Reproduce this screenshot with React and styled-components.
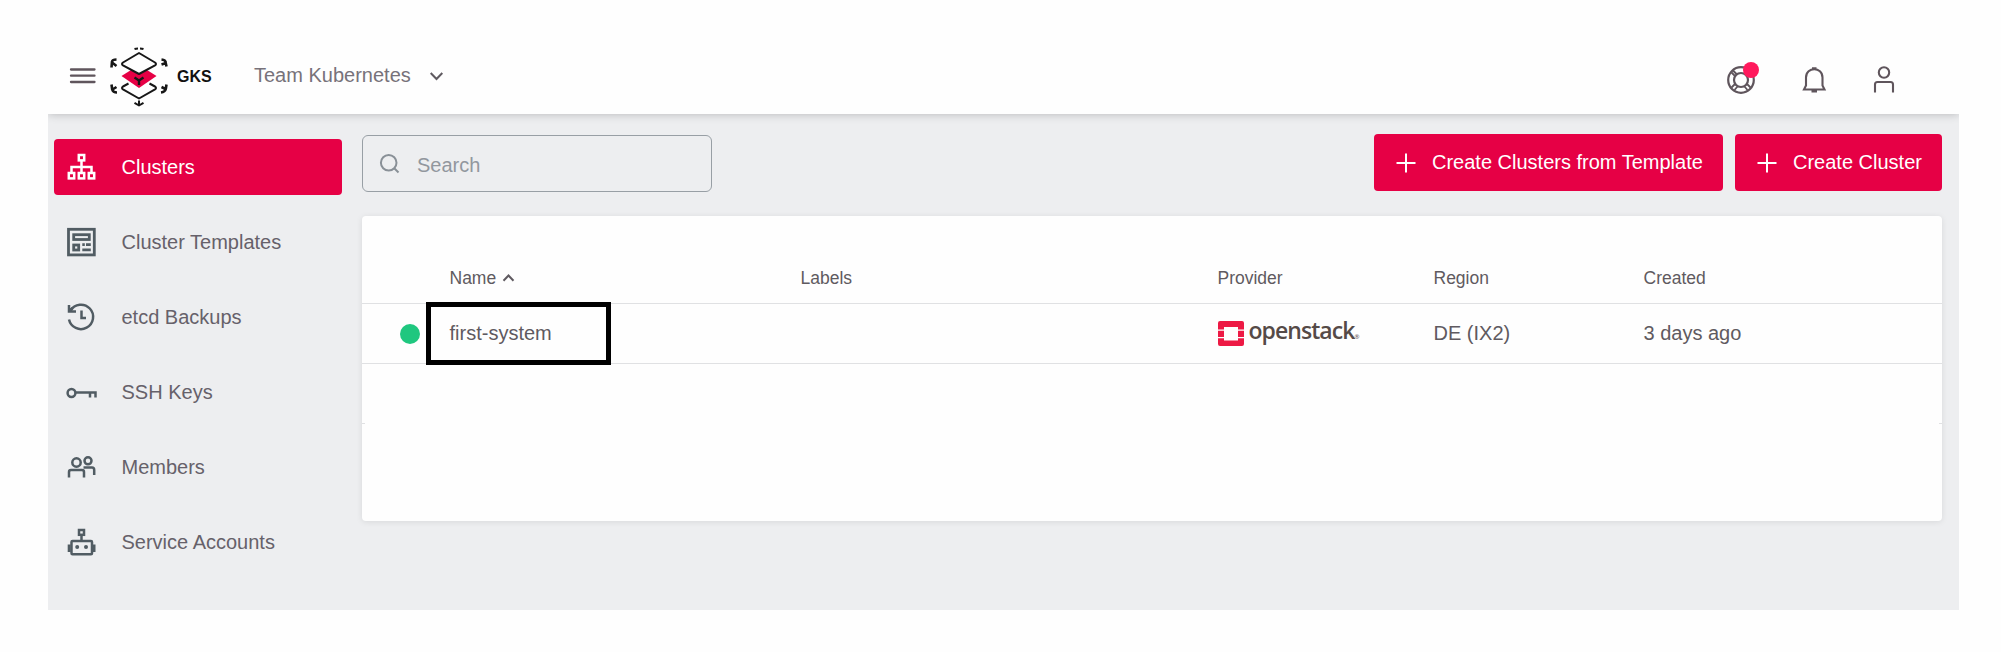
import React from "react";
import styled, { createGlobalStyle, css } from "styled-components";

const GlobalStyle = createGlobalStyle`
  *, *::before, *::after { box-sizing: border-box; }
  body {
    margin: 0;
    background: #fefefe;
    font-family: "Liberation Sans", Arial, sans-serif;
    font-size: 20px;
    color: #5f5a60;
  }
`;

const Frame = styled.div`
  width: 1911px;
  height: 610px;
  margin-left: 48px;
  display: flex;
  flex-direction: column;
  overflow: hidden;
  background: #edeef0;
`;

const Header = styled.header`
  flex: none;
  height: 114px;
  padding: 40px 59px 0 20px;
  display: flex;
  align-items: flex-start;
  justify-content: space-between;
  background: #fefefe;
  box-shadow: 0 0 9px rgba(0, 0, 0, 0.24);
  z-index: 1;
`;

const HeaderGroup = styled.div`
  display: flex;
  align-items: center;
  height: 74px;
  padding-bottom: 3px;
`;

const Icon = styled.svg.attrs((p) => ({ fill: "none", strokeWidth: p.strokeWidth || 2 }))`
  display: block;
  flex: none;
  overflow: visible;
  stroke: currentColor;
  width: ${(p) => p.$w || 32}px;
  height: ${(p) => p.$h || 32}px;
`;

const MenuButton = styled.button`
  border: 0;
  padding: 0 0 0 2px;
  margin-right: 14px;
  background: none;
  color: #5f555c;
  line-height: 0;
`;

const Brand = styled.span`
  margin: 2px 0 0 9px;
  font-size: 16px;
  font-weight: 700;
  color: #111;
  width: 77px;
`;

const Project = styled.span`
  color: #77727a;
  width: 176px;
`;

const Actions = styled(HeaderGroup)`
  gap: 38px;
  height: 81px;
  color: #5f555c;
`;

const ActionButton = styled.span`
  position: relative;
  &:first-child { margin-right: 3px; }
`;

const Badge = styled.span`
  position: absolute;
  top: -1px;
  right: -2px;
  width: 16px;
  height: 16px;
  border-radius: 50%;
  background: #ff195c;
`;

const Body = styled.div`
  flex: 1;
  display: flex;
  align-items: flex-start;
`;

const Sidebar = styled.nav`
  width: 314px;
  padding: 25px 20px 0 6px;
  display: flex;
  flex-direction: column;
  gap: 19.2px;
`;

const NavItem = styled.a`
  display: flex;
  align-items: center;
  height: 56px;
  padding-left: 12px;
  gap: 23.5px;
  border-radius: 4px;
  color: #66616a;
  svg { color: #515c63; }
  ${(p) =>
    p.$active &&
    css`
      background: #e60045;
      color: #fff;
      svg { color: #fff; }
    `}
`;

const Main = styled.main`
  flex: 1;
  padding: 20px 17px 0 0;
`;

const Toolbar = styled.div`
  display: flex;
  align-items: flex-start;
  gap: 12px;
`;

const SearchBox = styled.label`
  display: flex;
  align-items: center;
  gap: 17px;
  width: 350px;
  height: 57px;
  margin: 1px auto 0 0;
  padding: 0 17px 0 17px;
  border: 1px solid #989fa5;
  border-radius: 6px;
  color: #899097;
`;

const SearchInput = styled.input`
  flex: 1;
  min-width: 0;
  border: 0;
  padding: 3px 0 0;
  outline: 0;
  background: none;
  font: inherit;
  &::placeholder { color: #92979e; opacity: 1; }
`;

const PrimaryButton = styled.button`
  display: flex;
  align-items: center;
  gap: 16px;
  width: ${(p) => p.$width}px;
  height: 57px;
  padding: 0 0 0 22px;
  border: 0;
  border-radius: 4px;
  background: #e60045;
  color: #fff;
  font: inherit;
  white-space: nowrap;
`;

const Card = styled.section`
  height: 305px;
  margin-top: 24px;
  padding-top: 36px;
  border-radius: 4px;
  background: #fefefe;
  box-shadow: 0 1px 6px rgba(0, 0, 0, 0.09);
`;

const Row = styled.div`
  display: grid;
  grid-template-columns: 87.5px 351px 417px 216px 210px 1fr;
  align-items: center;
  height: ${(p) => (p.$head ? 52 : 60)}px;
  padding-top: ${(p) => (p.$head ? 1 : 0)}px;
  border-bottom: 1px solid #e0e1e3;
  font-size: ${(p) => (p.$head ? 17.5 : 20)}px;
`;

const HeadCell = styled.div`
  display: flex;
  align-items: center;
  gap: 7px;
`;

const Status = styled.span`
  width: 20px;
  height: 20px;
  margin: 1px 0 0 37.5px;
  border-radius: 50%;
  background: #1fc77f;
`;

const NameCell = styled.div`
  position: relative;
`;

const Highlight = styled.span`
  position: absolute;
  left: -23.5px;
  top: -20px;
  width: 185px;
  height: 63px;
  border: 5px solid #000;
  pointer-events: none;
`;

const Provider = styled.div`
  display: flex;
  align-items: center;
  gap: 5px;
  color: #554a47;
`;

const ProviderName = styled.span`
  display: inline-block;
  font-family: "Open Sans", "Noto Sans", sans-serif;
  font-weight: 600;
  font-size: 23px;
  line-height: 26px;
  letter-spacing: -0.95px;
  small { font-size: 6px; letter-spacing: 0; font-weight: 400; }
`;

const EmptyRow = styled.div`
  display: flex;
  justify-content: space-between;
  height: 60px;
  align-items: flex-end;
  &::before, &::after {
    content: "";
    width: 3px;
    height: 1px;
    background: #e0e1e3;
  }
`;

const Logo = () => (
  <Icon $w={58} $h={60} viewBox="0 0 58 60">
    <path d="M29 19 46.5 30 29 42 11.5 30Z" fill="#e60045" stroke="none" />
    <g stroke="#171717" strokeLinejoin="round">
      <path d="M29 7 45 16.5Q47 18 45 19.3L29 28 13 19.3Q11 18 13 16.5Z" fill="#fefefe" />
      <path d="M18.5 37.500 13 40.500Q11 42 13 43.300L29 52.500 45 43.300Q47 42 45 40.500L39.500 37.500" />
      <path d="M24.500 31.500 29 34.500 33.500 31.500M29 34v5" strokeWidth="2.400" />
      <path d="M24.500 3Q26 2.500 28 2.500M30 2.500Q32 2.500 33.500 3M24.500 56.800 29 59.500 33.500 56.800M29 54.500v5" />
      <path d="M6.500 13.500Q2.500 13.500 2 15.500L1.500 21.500M2 16.500 6.500 20M51.500 13.500Q55.500 14 55.500 16L56.500 20.500M56 17 51.500 18.500M1.500 38.500 2.200 43.500Q3 46.500 7 46.500M2.500 43.500 6.500 41M56.500 38.500 55.800 43Q55 46 51 46.500M55.500 43 51.500 41" strokeWidth="2.600" />
    </g>
  </Icon>
);

const Lifebuoy = () => (
  <Icon viewBox="0 0 32 32" strokeWidth={2.2}>
    <circle cx="16" cy="17" r="12.800" />
    <circle cx="16" cy="17" r="7" />
    <path d="M8 7.500 12 11.500M6.500 9.500 10 13M23.500 7 20 11M6.500 24.500 10 21M9.500 27 12.500 23.500M25.500 24.500 22 21M22.500 27 19.500 23.500" strokeWidth="1.800" />
  </Icon>
);

const Bell = () => (
  <Icon viewBox="0 0 32 32" strokeWidth={2.1}>
    <path d="M6 26.500H26.500L24.500 22.500V14.500C24.500 3.500 8 3.500 8 14.500V22.500Z" />
    <path d="M14 5.500h4.500M13.500 28.200h5.500" strokeWidth="2.600" />
  </Icon>
);

const User = () => (
  <Icon viewBox="0 0 32 32" strokeWidth={2.1}>
    <circle cx="16" cy="9.500" r="5.200" />
    <path d="M7 29.500V21.500Q7 19 9.500 19H22.500Q25 19 25 21.500V29.500" />
  </Icon>
);

const navIcons = {
  clusters: (
    <>
      <rect x="12.800" y="4" width="5.400" height="5.400" />
      <path d="M15.500 9.500v12M5.500 21.500V16H25.500v5.500" />
      <rect x="2.800" y="22" width="5.400" height="5.400" />
      <rect x="12.800" y="22" width="5.400" height="5.400" />
      <rect x="22.800" y="22" width="5.400" height="5.400" />
    </>
  ),
  templates: (
    <g strokeWidth="2.800">
      <rect x="2.500" y="3.300" width="25.800" height="25.600" />
      <rect x="7.700" y="8.700" width="15.600" height="4.800" />
      <rect x="7.700" y="19" width="5" height="5" />
      <path d="M16.300 18.700h2.500M20 18.700h4.800M16.300 23.800h8.500" />
    </g>
  ),
  backups: (
    <>
      <path d="M4.500 9.500A12.200 12.200 0 1 1 3 18.500" />
      <path d="M3 4v6.500h7M3.500 10 6.500 7M15.500 9.500v7.500h4.500" />
    </>
  ),
  keys: (
    <>
      <circle cx="5.500" cy="16" r="3.900" />
      <path d="M9.500 15.500H29.500V20.500M24 15.500v5" />
    </>
  ),
  members: (
    <>
      <circle cx="10.500" cy="10.500" r="4.200" />
      <circle cx="22" cy="8.800" r="3.500" />
      <path d="M3 25.500V20Q3 18 5 18H16Q18 18 18 20V25.500M17.500 15.500H26Q28.200 15.500 28.200 18V23" />
    </>
  ),
  accounts: (
    <>
      <rect x="13" y="3" width="5" height="4.800" />
      <path d="M15.500 8v6" />
      <path d="M3.200 17.500v7.500M28 17.500v7.500" strokeWidth="3" />
      <rect x="5.500" y="14" width="20.500" height="13.200" rx="1" />
      <circle cx="11.200" cy="20" r="2" fill="currentColor" stroke="none" />
      <circle cx="20" cy="20" r="2" fill="currentColor" stroke="none" />
    </>
  ),
};

const navItems = [
  ["clusters", "Clusters"],
  ["templates", "Cluster Templates"],
  ["backups", "etcd Backups"],
  ["keys", "SSH Keys"],
  ["members", "Members"],
  ["accounts", "Service Accounts"],
];

const Plus = () => (
  <Icon $w={20} $h={20} viewBox="0 0 20 20">
    <path d="M10 .5v19M.5 10h19" />
  </Icon>
);

const OpenStackMark = () => (
  <Icon $w={26} $h={26} viewBox="0 0 26 26">
    <g fill="#ed1944" stroke="none">
      <path d="M2 0H24Q26 0 26 2V8.500H20V6H6V8.500H0V2Q0 0 2 0Z" />
      <path d="M0 9.700h6v6.300H0ZM20 9.700h6v6.300h-6Z" />
      <path d="M0 17.200H6V19.500H20V17.200H26V23Q26 25 24 25H2Q0 25 0 23Z" />
    </g>
  </Icon>
);

export default function App() {
  return (
    <>
      <GlobalStyle />
      <Frame>
        <Header>
          <HeaderGroup>
            <MenuButton aria-label="Menu">
              <Icon $w={26} $h={16} viewBox="0 0 26 16">
                <path d="M1 1.500h23.500M1 7.700h23.500M1 14h23.500" strokeWidth="2.300" strokeLinecap="round" />
              </Icon>
            </MenuButton>
            <Logo />
            <Brand>GKS</Brand>
            <Project>Team Kubernetes</Project>
            <Icon $w={13} $h={8} viewBox="0 0 13 8">
              <path d="M.7 1 6.500 7 12.300 1" />
            </Icon>
          </HeaderGroup>
          <Actions>
            <ActionButton><Lifebuoy /><Badge /></ActionButton>
            <ActionButton><Bell /></ActionButton>
            <ActionButton><User /></ActionButton>
          </Actions>
        </Header>
        <Body>
          <Sidebar>
            {navItems.map(([id, label]) => (
              <NavItem key={id} $active={id === "clusters"}>
                <Icon viewBox="0 0 32 32" strokeWidth={2.5}>{navIcons[id]}</Icon>
                {label}
              </NavItem>
            ))}
          </Sidebar>
          <Main>
            <Toolbar>
              <SearchBox>
                <Icon $w={20} $h={20} viewBox="0 0 20 20">
                  <circle cx="8.700" cy="8.700" r="7.800" />
                  <path d="M14 14 18.500 18.500" />
                </Icon>
                <SearchInput placeholder="Search" />
              </SearchBox>
              <PrimaryButton $width={349}><Plus />Create Clusters from Template</PrimaryButton>
              <PrimaryButton $width={207}><Plus />Create Cluster</PrimaryButton>
            </Toolbar>
            <Card>
              <Row $head>
                <span />
                <HeadCell>
                  Name
                  <Icon $w={11} $h={7} viewBox="0 0 11 7">
                    <path d="M.5 5.700 5.500 .5 10.500 5.700" />
                  </Icon>
                </HeadCell>
                <HeadCell>Labels</HeadCell>
                <HeadCell>Provider</HeadCell>
                <HeadCell>Region</HeadCell>
                <HeadCell>Created</HeadCell>
              </Row>
              <Row>
                <Status />
                <NameCell>first-system<Highlight /></NameCell>
                <span />
                <Provider>
                  <OpenStackMark />
                  <ProviderName>openstack<small>®</small></ProviderName>
                </Provider>
                <span>DE (IX2)</span>
                <span>3 days ago</span>
              </Row>
              <EmptyRow />
            </Card>
          </Main>
        </Body>
      </Frame>
    </>
  );
}
